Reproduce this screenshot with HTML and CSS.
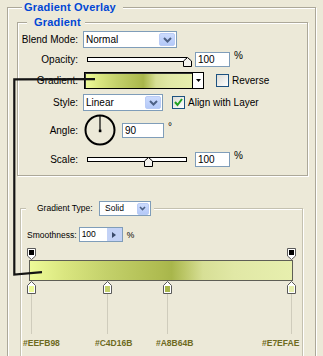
FILE: index.html
```html
<!DOCTYPE html>
<html>
<head lang="en">
    <meta charset="UTF-8">
    <title>Gradient Overlay</title>
    <link rel="stylesheet" href="styles.css">
</head>
<body>
    <fieldset class="group outer">
        <legend>Gradient Overlay</legend>

        <fieldset class="group inner">
            <legend>Gradient</legend>

            <div class="row r1">
                <span class="lbl">Blend Mode:</span>
                <div class="select blend">
                    <span class="txt">Normal</span>
                    <span class="btn"><svg width="9" height="6" viewBox="0 0 9 6"><polyline points="1,1 4.5,4.5 8,1" fill="none" stroke="#4D6185" stroke-width="2"/></svg></span>
                </div>
            </div>

            <div class="row r2">
                <span class="lbl">Opacity:</span>
                <div class="slider">
                    <svg class="thumb t-opacity" width="9" height="10" viewBox="0 0 9 10"><polygon points="0.5,9.5 0.5,4 4.5,0.5 8.5,4 8.5,9.5" fill="#F4F3EE" stroke="#000"/></svg>
                </div>
                <span class="num">100</span>
                <span class="unit">%</span>
            </div>

            <div class="row r3">
                <span class="lbl">Gradient:</span>
                <div class="swatch">
                    <span class="grad"></span>
                    <span class="arrow"><svg width="5" height="3" viewBox="0 0 5 3"><polygon points="0,0 5,0 2.5,3" fill="#000"/></svg></span>
                </div>
                <span class="check"></span>
                <span class="chk-lbl">Reverse</span>
            </div>

            <div class="row r4">
                <span class="lbl">Style:</span>
                <div class="select style">
                    <span class="txt">Linear</span>
                    <span class="btn"><svg width="9" height="6" viewBox="0 0 9 6"><polyline points="1,1 4.5,4.5 8,1" fill="none" stroke="#4D6185" stroke-width="2"/></svg></span>
                </div>
                <span class="check on"><svg width="11" height="11" viewBox="0 0 11 11"><polyline points="2,5 4.5,8 9,2" fill="none" stroke="#21A121" stroke-width="2"/></svg></span>
                <span class="chk-lbl">Align with Layer</span>
            </div>

            <div class="row r5">
                <span class="lbl">Angle:</span>
                <svg class="dial" width="32" height="32" viewBox="0 0 32 32">
                    <circle cx="16" cy="16" r="14.5" fill="none" stroke="#000" stroke-width="2"/>
                    <line x1="16" y1="2" x2="16" y2="16" stroke="#000" stroke-width="1.2"/>
                    <rect x="14.8" y="15.6" width="2.6" height="2.6" fill="#000"/>
                </svg>
                <span class="num angle">90</span>
                <span class="unit deg">°</span>
            </div>

            <div class="row r6">
                <span class="lbl">Scale:</span>
                <div class="slider">
                    <svg class="thumb t-scale" width="9" height="10" viewBox="0 0 9 10"><polygon points="0.5,9.5 0.5,4 4.5,0.5 8.5,4 8.5,9.5" fill="#F4F3EE" stroke="#000"/></svg>
                </div>
                <span class="num">100</span>
                <span class="unit">%</span>
            </div>
        </fieldset>

        <fieldset class="editor">
            <legend>
                <span>Gradient Type:</span>
                <span class="select solid">
                    <span class="txt">Solid</span>
                    <span class="btn"><svg width="7" height="5" viewBox="0 0 7 5"><polyline points="1,1 3.5,3.5 6,1" fill="none" stroke="#4D6185" stroke-width="1.6"/></svg></span>
                </span>
            </legend>

            <div class="smooth">
                <span>Smoothness:</span>
                <span class="spin">
                    <span class="txt">100</span>
                    <span class="spin-btn"><svg width="4" height="6" viewBox="0 0 4 6"><polygon points="0,0 4,3 0,6" fill="#3A4A6A"/></svg></span>
                </span>
                <span class="unit">%</span>
            </div>

            <div class="canvas">
                <svg class="ostop os-left" width="9" height="12" viewBox="0 0 9 12"><polygon points="0.5,0.5 8.5,0.5 8.5,8 4.5,11.5 0.5,8" fill="#fff" stroke="#5A5A5A"/><rect x="2" y="2" width="5" height="5" fill="#000"/></svg>
                <svg class="ostop os-right" width="9" height="12" viewBox="0 0 9 12"><polygon points="0.5,0.5 8.5,0.5 8.5,8 4.5,11.5 0.5,8" fill="#fff" stroke="#5A5A5A"/><rect x="2" y="2" width="5" height="5" fill="#000"/></svg>

                <div class="bar"></div>

                <div class="cstop cs1">
                    <svg width="9" height="13" viewBox="0 0 9 13"><polygon points="4.5,0.5 8.5,4.5 8.5,12.5 0.5,12.5 0.5,4.5" fill="#fff" stroke="#5A5A5A"/><rect x="2" y="5" width="5" height="6" fill="#EEFB98"/></svg>
                    <span class="tick"></span>
                </div>
                <div class="cstop cs2">
                    <svg width="9" height="13" viewBox="0 0 9 13"><polygon points="4.5,0.5 8.5,4.5 8.5,12.5 0.5,12.5 0.5,4.5" fill="#fff" stroke="#5A5A5A"/><rect x="2" y="5" width="5" height="6" fill="#C4D16B"/></svg>
                    <span class="tick"></span>
                </div>
                <div class="cstop cs3">
                    <svg width="9" height="13" viewBox="0 0 9 13"><polygon points="4.5,0.5 8.5,4.5 8.5,12.5 0.5,12.5 0.5,4.5" fill="#fff" stroke="#5A5A5A"/><rect x="2" y="5" width="5" height="6" fill="#A8B64B"/></svg>
                    <span class="tick"></span>
                </div>
                <div class="cstop cs4">
                    <svg width="9" height="13" viewBox="0 0 9 13"><polygon points="4.5,0.5 8.5,4.5 8.5,12.5 0.5,12.5 0.5,4.5" fill="#fff" stroke="#5A5A5A"/><rect x="2" y="5" width="5" height="6" fill="#E7EFAE"/></svg>
                    <span class="tick"></span>
                </div>

                <span class="hex h1">#EEFB98</span>
                <span class="hex h2">#C4D16B</span>
                <span class="hex h3">#A8B64B</span>
                <span class="hex h4">#E7EFAE</span>
            </div>
        </fieldset>
    </fieldset>

    <!-- hand drawn connector from the small swatch to the big bar -->
    <svg class="wire" width="323" height="356" viewBox="0 0 323 356">
        <path d="M95 79.2 L14.3 79.4 L14.3 274.6 L42 272.2" fill="none" stroke="#141414" stroke-width="2.2"/>
    </svg>
</body>
</html>
```
FILE: styles.css
```css
*{
    box-sizing: border-box;
}
html, body{
    margin: 0;
    padding: 0;
    overflow: hidden;
}
body{
    width: 323px;
    height: 356px;
    position: relative;
    background: #ECE9D8;
    color: #000;
    font-family: "Liberation Sans", Arial, sans-serif;
    font-size: 10px;
}

/* etched group boxes */
.group, .editor{
    margin: 0;
    min-width: 0;
    border: 1px solid #ACA899;
    box-shadow: inset 1px 1px 0 #fff, 1px 1px 0 #fff;
}
.group > legend{
    height: 13px;
    line-height: 13px;
    font-size: 11px;
    font-weight: bold;
    letter-spacing: 0.2px;
    color: #0046D5;
    background: #ECE9D8;
}
.outer{
    margin: 1px 0 0 7px;
    width: 309px;
    padding: 2px 7px 10px 9px;
}
.outer > legend{
    margin-left: 5px;
    padding: 0 7px 0 2px;
}
.inner{
    width: 291px;
    padding: 2px 0 7px 2px;
}
.inner > legend{
    margin-left: 7px;
    padding: 0 4px 0 7px;
}

/* rows of the gradient box */
.row{
    display: flex;
    align-items: center;
    height: 17px;
}
.r2{ margin-top: 3px; }
.r3{ margin-top: 4px; }
.r4{ margin-top: 5px; }
.r5{ margin-top: 3px; height: 32px; }
.r6{ margin-top: 5px; }

.lbl{
    width: 58px;
    flex: none;
    text-align: right;
}

.select{
    display: flex;
    align-items: center;
    height: 17px;
    padding: 0 1px 0 2px;
    background: #fff;
    border: 1px solid #7F9DB9;
}
.select .txt{
    flex: 1;
}
.select .btn{
    width: 16px;
    height: 13px;
    display: flex;
    align-items: center;
    justify-content: center;
    border: 1px solid #BACCF6;
    border-radius: 2px;
    background: linear-gradient(#CCDBFD, #B4C9F8);
}
.blend{
    width: 94px;
    margin-left: 5px;
}
.style{
    width: 80px;
    margin-left: 5px;
}

.slider{
    position: relative;
    width: 100px;
    height: 5px;
    margin-left: 9px;
    background: #fff;
    border: 1px solid #000;
}
.thumb{
    position: absolute;
    top: -1px;
}
.t-opacity{ left: 95px; }
.t-scale{ left: 56px; }

.num{
    height: 15px;
    width: 35px;
    margin-left: 8px;
    padding-left: 2px;
    line-height: 13px;
    background: #fff;
    border: 1px solid #7F9DB9;
}
.unit{
    align-self: flex-start;
    margin-left: 4px;
    line-height: 10px;
}
.angle{
    width: 42px;
    margin-left: 6px;
}
.deg{
    margin-top: 8px;
}

.swatch{
    display: flex;
    width: 120px;
    height: 17px;
    margin-left: 6px;
    border: 1px solid #000;
    box-shadow: inset 1px 1px 0 #333;
}
.grad, .bar{
    background: linear-gradient(90deg, #EEFB98 0%, #DAE680 13%, #C4D16B 29%, #AEBB50 50%, #A8B64B 54%, #BCC768 59%, #D7DF96 66%, #E1E8A6 78%, #E7EFAE 100%);
}
.grad{
    flex: 1;
    margin: 1px 0 0 1px;
}
.arrow{
    width: 11px;
    display: flex;
    align-items: center;
    justify-content: center;
    background: #fff;
    border-left: 1px solid #000;
}

.check{
    width: 13px;
    height: 13px;
    margin-left: 12px;
    display: flex;
    align-items: center;
    justify-content: center;
    border: 1px solid #1C5180;
    background: linear-gradient(135deg, #DCDCD7, #FFFFFF);
}
.check.on{
    margin-left: 9px;
}
.chk-lbl{
    margin-left: 3px;
}

.dial{
    margin-left: 6px;
}

/* gradient editor */
.editor{
    margin: 25px 0 0 3px;
    width: 283px;
    padding: 11px 0 0 5px;
    border-color: #C4C1B0;
    font-size: 8.5px;
}
.editor > legend{
    height: 15px;
    line-height: 15px;
    padding: 0 3px 0 11px;
    background: #ECE9D8;
}
.editor > legend span{
    vertical-align: top;
}
.solid{
    display: inline-flex;
    width: 52px;
    height: 15px;
    margin-left: 4px;
}
.solid .txt{
    line-height: 13px;
    padding-left: 3px;
}
.solid .btn{
    width: 12px;
    height: 12px;
}

.smooth{
    display: flex;
    align-items: center;
    height: 15px;
    margin-left: 1px;
}
.spin{
    display: flex;
    width: 44px;
    height: 15px;
    margin-left: 2px;
    background: #fff;
    border: 1px solid #7F9DB9;
}
.spin .txt{
    flex: 1;
    padding-left: 2px;
    line-height: 13px;
}
.spin-btn{
    width: 15px;
    display: flex;
    align-items: center;
    justify-content: center;
    background: #C3D2F6;
}
.smooth .unit{
    align-self: center;
}

.canvas{
    position: relative;
    height: 120px;
}
.ostop{
    position: absolute;
    top: 6px;
}
.os-left{ left: 1px; }
.os-right{ left: 261px; }

.bar{
    position: absolute;
    left: 3px;
    top: 18px;
    width: 264px;
    height: 21px;
    border: 1px solid #5E5E55;
}

.cstop{
    position: absolute;
    top: 39px;
    width: 9px;
    display: flex;
    flex-direction: column;
    align-items: center;
}
.cstop svg{
    display: block;
}
.tick{
    width: 1px;
    height: 40px;
    background: #CFCCBC;
}
.cs1{ left: 1px; }
.cs2{ left: 77px; }
.cs3{ left: 137px; }
.cs4{ left: 261px; }

.hex{
    position: absolute;
    top: 96px;
    font-weight: bold;
    color: #6E6A1E;
}
.h1{ left: -3px; }
.h2{ left: 69px; }
.h3{ left: 130px; }
.h4{ left: 236px; }

.wire{
    position: absolute;
    left: 0;
    top: 0;
    pointer-events: none;
}
```
